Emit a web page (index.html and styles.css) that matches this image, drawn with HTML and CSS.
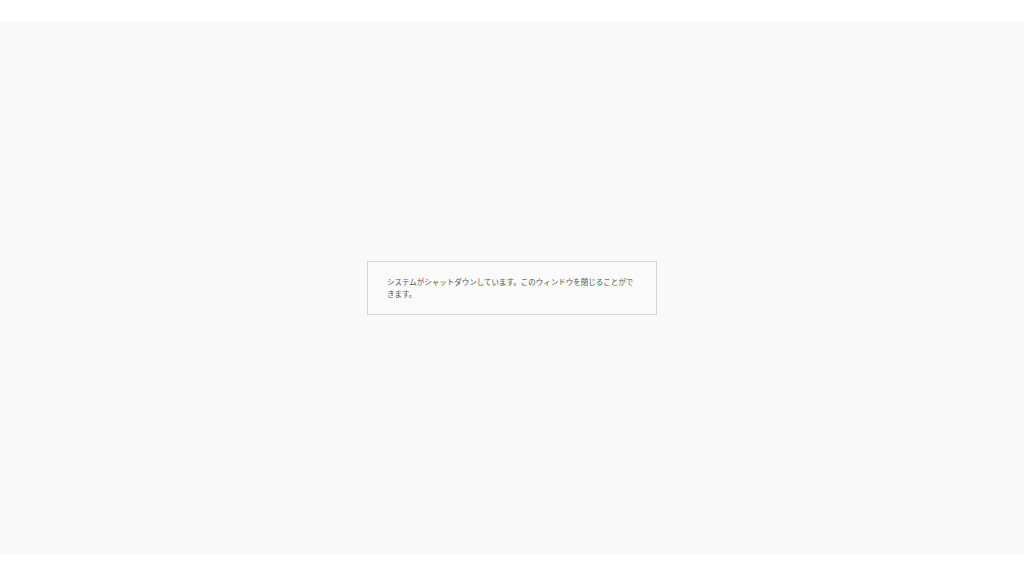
FILE: index.html
```html
<!DOCTYPE html>
<html lang="ja">
<head>
<meta charset="utf-8">
<title>シャットダウン</title>
<link rel="stylesheet" href="styles.css">
</head>
<body>
<div class="page">
  <main class="panel">
    <div class="notice">
      <p class="message">システムがシャットダウンしています。このウィンドウを閉じることができます。</p>
    </div>
  </main>
</div>
</body>
</html>
```

FILE: styles.css
```css
html, body {
  margin: 0;
  padding: 0;
  background: #ffffff;
}
.page {
  width: 1024px;
  height: 576px;
  padding: 22px 0;
  box-sizing: border-box;
}
.panel {
  height: 532px;
  background: #f9f9f9;
  display: flex;
  align-items: center;
  justify-content: center;
}
.notice {
  width: 290px;
  box-sizing: border-box;
  padding: 14px 19px 15px;
  border: 1px solid #d4d4d4;
  background: #fafafa;
}
.message {
  margin: 0;
  font-family: "Noto Sans CJK JP", "Noto Sans", sans-serif;
  font-size: 7.5px;
  line-height: 11.5px;
  color: #555555;
}
```
